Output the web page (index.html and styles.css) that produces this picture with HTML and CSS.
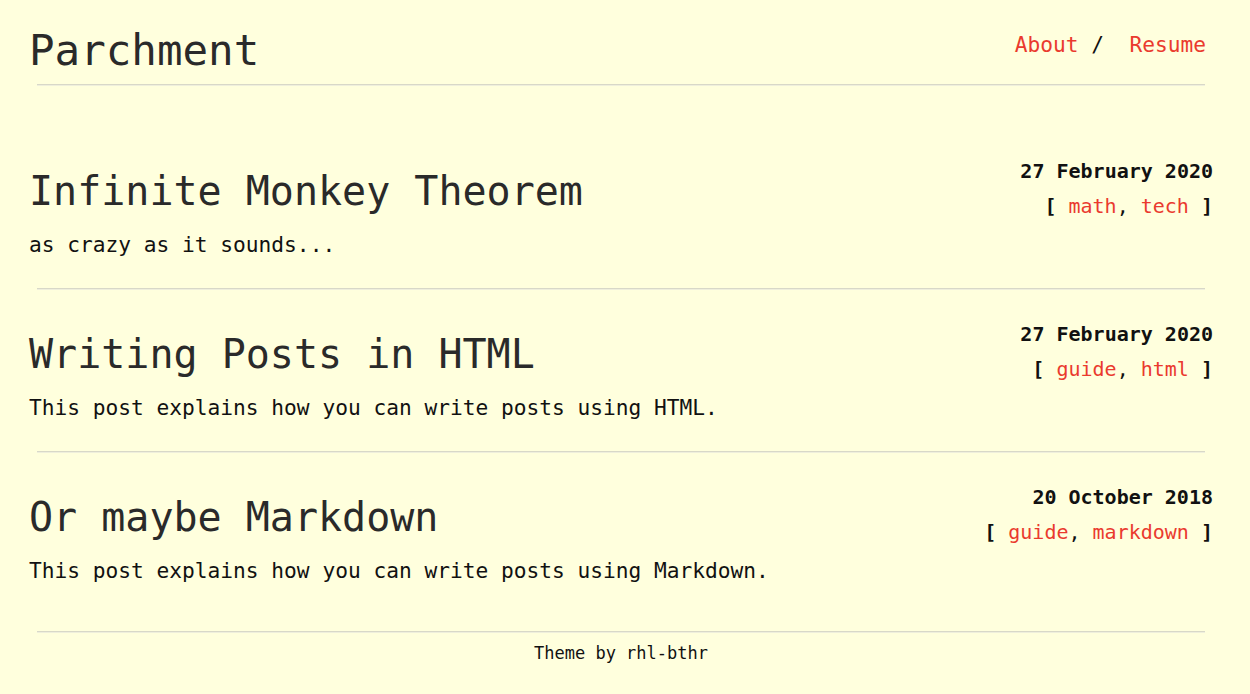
FILE: index.html
```html
<!DOCTYPE html>
<html lang="en">
<head>
<meta charset="utf-8">
<title>Parchment</title>
<link rel="stylesheet" href="styles.css">
</head>
<body>
<div class="page">
  <header class="site-header">
    <h1 class="site-title">Parchment</h1>
    <nav class="site-nav"><a href="#">About</a> / &nbsp;<a href="#">Resume</a></nav>
  </header>
  <hr class="rule">
  <main class="posts">
    <article class="post">
      <div class="post-row">
        <div class="post-main">
          <h2 class="post-title">Infinite Monkey Theorem</h2>
          <p class="post-desc">as crazy as it sounds...</p>
        </div>
        <div class="post-meta">
          <div class="post-date">27 February 2020</div>
          <div class="post-tags"><b>[</b> <a href="#">math</a>, <a href="#">tech</a> <b>]</b></div>
        </div>
      </div>
      <hr class="rule post-rule">
    </article>
    <article class="post">
      <div class="post-row">
        <div class="post-main">
          <h2 class="post-title">Writing Posts in HTML</h2>
          <p class="post-desc">This post explains how you can write posts using HTML.</p>
        </div>
        <div class="post-meta">
          <div class="post-date">27 February 2020</div>
          <div class="post-tags"><b>[</b> <a href="#">guide</a>, <a href="#">html</a> <b>]</b></div>
        </div>
      </div>
      <hr class="rule post-rule">
    </article>
    <article class="post">
      <div class="post-row">
        <div class="post-main">
          <h2 class="post-title">Or maybe Markdown</h2>
          <p class="post-desc">This post explains how you can write posts using Markdown.</p>
        </div>
        <div class="post-meta">
          <div class="post-date">20 October 2018</div>
          <div class="post-tags"><b>[</b> <a href="#">guide</a>, <a href="#">markdown</a> <b>]</b></div>
        </div>
      </div>
    </article>
  </main>
  <hr class="rule footer-rule">
  <footer class="site-footer">Theme by rhl-bthr</footer>
</div>
</body>
</html>
```

FILE: styles.css
```css
html, body {
  margin: 0;
  padding: 0;
  background: #ffffdd;
}

body {
  font-family: "DejaVu Sans Mono", "Liberation Mono", monospace;
  color: #111;
}

a {
  color: #ea3a2e;
  text-decoration: none;
}

.page {
  padding: 0 37px 0 29px;
}

.site-header {
  display: flex;
  justify-content: space-between;
  align-items: flex-start;
  padding-top: 26px;
}

.site-title {
  margin: 0;
  font-size: 42.5px;
  line-height: 50px;
  font-weight: normal;
  color: #2a2a2a;
}

.site-nav {
  margin-top: 6px;
  margin-right: 7px;
  font-size: 21.2px;
  line-height: 25px;
  color: #111;
}

.rule {
  height: 0;
  margin: 8px 8px 0 8px;
  border: 0;
  border-top: 1px solid #d8d8c8;
  border-bottom: 1px solid #efefdc;
}

.posts {
  padding-top: 41px;
}

.post {
  padding-top: 27px;
}

.post-row {
  display: flex;
  justify-content: space-between;
  align-items: flex-start;
}

.post-main {
  padding-top: 13px;
}

.post-title {
  margin: 0;
  font-size: 40px;
  line-height: 48px;
  font-weight: normal;
  color: #2a2a2a;
}

.post-desc {
  margin: 14px 0 0 0;
  font-size: 21.2px;
  line-height: 31px;
  color: #111;
}

.post-meta {
  text-align: right;
  font-size: 20px;
  line-height: 35px;
  color: #111;
}

.post-date {
  font-weight: bold;
}

.post-tags b {
  font-weight: bold;
}

.post-rule {
  margin-top: 28px;
}

.footer-rule {
  margin-top: 45px;
}

.site-footer {
  padding-top: 10px;
  text-align: center;
  font-size: 17px;
  line-height: 20px;
  color: #111;
}
```
